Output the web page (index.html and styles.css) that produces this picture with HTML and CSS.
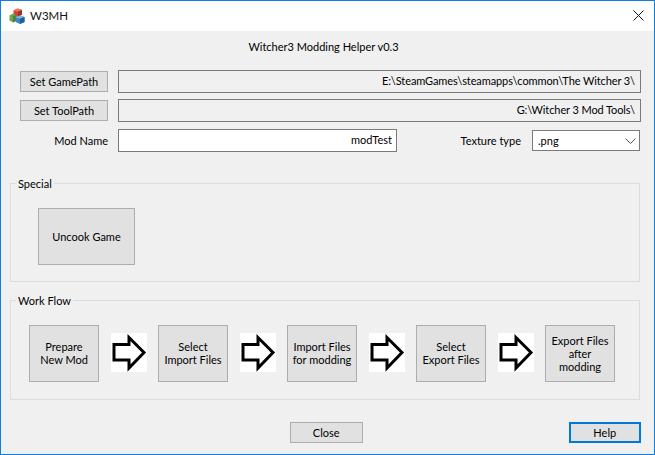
FILE: index.html
```html
<!DOCTYPE html>
<html lang="en">
<head>
<meta charset="utf-8">
<title>W3MH</title>
<link rel="stylesheet" href="styles.css">
</head>
<body>
<div class="window">
  <header class="titlebar">
    <svg class="app-icon" width="16" height="16" viewBox="0 0 16 16">
      <path d="M4.5 2.5 8.5.5 13 2 13 6.5 9 9 4.5 7z" fill="#d8402f"/>
      <path d="M4.5 2.5 8.5.5 13 2 9 3.8z" fill="#ea7a62"/>
      <path d="M9 3.8 13 2 13 6.5 9 9z" fill="#a82c20"/>
      <path d="M.5 7.5 4 5.5 7.5 7 7.5 12.5 4 14.5.5 12.5z" fill="#6fa74f"/>
      <path d="M4 8 7.5 7 7.5 12.5 4 14.5z" fill="#4a8238"/>
      <path d="M6.5 9.5 11 7.5 15.5 9 15.5 14 11 16 6.5 14z" fill="#3f88c8"/>
      <path d="M6.5 9.5 11 7.5 15.5 9 11 10.8z" fill="#7db6e2"/>
      <path d="M11 10.8 15.5 9 15.5 14 11 16z" fill="#1f5f9c"/>
    </svg>
    <span class="app-name">W3MH</span>
    <svg class="close-x" width="11" height="11" viewBox="0 0 11 11">
      <path d="M.5.5l10 10M10.5.5l-10 10" stroke="#111" fill="none"/>
    </svg>
  </header>
  <main class="content">
    <div class="heading">Witcher3 Modding Helper v0.3</div>
    <div class="path-row">
      <button class="btn path-btn">Set GamePath</button>
      <div class="field readonly">E:\SteamGames\steamapps\common\The Witcher 3\</div>
    </div>
    <div class="path-row second">
      <button class="btn path-btn">Set ToolPath</button>
      <div class="field readonly">G:\Witcher 3 Mod Tools\</div>
    </div>
    <div class="mod-row">
      <label class="mod-label">Mod Name</label>
      <div class="field mod-field">modTest</div>
      <label class="tex-label">Texture type</label>
      <div class="select">
        <span>.png</span>
        <svg width="11" height="6" viewBox="0 0 11 6"><path d="M.5.5l5 5 5-5" stroke="#555" fill="none"/></svg>
      </div>
    </div>
    <fieldset class="group special">
      <legend>Special</legend>
      <button class="btn uncook">Uncook Game</button>
    </fieldset>
    <fieldset class="group flow">
      <legend>Work Flow</legend>
      <div class="flow-row">
        <button class="btn step two">Prepare<br>New Mod</button>
        <svg class="arrow" viewBox="0 0 36 39"><path d="M3 11.5H18V4.5L33 19.5 18 35V27H3z"/></svg>
        <button class="btn step two">Select<br>Import Files</button>
        <svg class="arrow" viewBox="0 0 36 39"><path d="M3 11.5H18V4.5L33 19.5 18 35V27H3z"/></svg>
        <button class="btn step two">Import Files<br>for modding</button>
        <svg class="arrow" viewBox="0 0 36 39"><path d="M3 11.5H18V4.5L33 19.5 18 35V27H3z"/></svg>
        <button class="btn step two">Select<br>Export Files</button>
        <svg class="arrow" viewBox="0 0 36 39"><path d="M3 11.5H18V4.5L33 19.5 18 35V27H3z"/></svg>
        <button class="btn step">Export Files<br>after<br>modding</button>
      </div>
    </fieldset>
    <div class="actions">
      <button class="btn action close">Close</button>
      <button class="btn action help">Help</button>
    </div>
  </main>
</div>
</body>
</html>
```

FILE: styles.css
```css
* { box-sizing: border-box; }
html, body { margin: 0; padding: 0; }
body {
  width: 655px;
  height: 455px;
  overflow: hidden;
  font-family: Lato, Roboto, sans-serif;
  font-size: 11px;
  color: #000;
}
.window {
  width: 655px;
  height: 455px;
  border: 1px solid #0f7fdc;
  background: #f0f0f0;
  display: flex;
  flex-direction: column;
}
.titlebar {
  height: 30px;
  flex: none;
  background: #fff;
  display: flex;
  align-items: center;
  padding: 0 10px 1px 8px;
}
.app-icon { margin-right: 5px; }
.app-name { font-size: 11.5px; flex: 1; color: #111; }
.close-x { display: block; }
.content {
  flex: 1;
  padding: 0 13px 0 9px;
  display: flex;
  flex-direction: column;
}
.heading {
  height: 39px;
  line-height: 32px;
  text-align: center;
  padding-right: 4px;
}
.btn {
  display: block;
  margin: 0;
  padding: 0;
  font: inherit;
  color: #000;
  background: #e1e1e1;
  border: 1px solid #adadad;
  border-radius: 0;
}
.path-row {
  display: flex;
  align-items: center;
  gap: 10px;
  height: 23px;
  padding-left: 10px;
}
.second { margin-top: 6px; }
.path-btn { width: 88px; height: 21px; }
.field {
  height: 23px;
  line-height: 20px;
  border: 1px solid #7a7a7a;
  text-align: right;
  padding: 0 4px;
}
.readonly { flex: 1; background: #f0f0f0; padding-right: 5px; letter-spacing: -0.1px; }
.mod-row {
  display: flex;
  align-items: center;
  height: 23px;
  margin-top: 7px;
}
.mod-label { width: 98px; text-align: right; margin-right: 10px; }
.mod-field { width: 279px; background: #fff; }
.tex-label { width: 124px; text-align: right; margin-right: 11px; }
.select {
  width: 108px;
  height: 21px;
  border: 1px solid #7a7a7a;
  background: #fff;
  display: flex;
  align-items: center;
  justify-content: space-between;
  padding: 0 3px 0 5px;
}
.group {
  margin: 0;
  border: 1px solid #dcdcdc;
  min-width: 0;
  width: 630px;
  padding: 0;
}
.group legend { padding: 0 2px; margin-left: 5px; line-height: 16px; transform: translateY(1px); }
.special { height: 107px; margin-top: 23px; }
.uncook { width: 97px; height: 57px; margin: 17px 0 0 27px; }
.flow { height: 108px; margin-top: 10px; }
.flow-row { display: flex; align-items: flex-start; margin: 17px 0 0 18px; }
.step { width: 70px; height: 57px; line-height: 13px; }
.two { padding-bottom: 2px; }
.arrow {
  width: 36px;
  height: 39px;
  margin: 8px 11px 0 12px;
  background: #fff;
  fill: #fff;
  stroke: #000;
  stroke-width: 3;
}
.actions { display: flex; margin-top: 22px; padding-left: 280px; }
.action { width: 73px; height: 21px; }
.help { margin-left: 206px; border: 2px solid #0078d7; }
```
